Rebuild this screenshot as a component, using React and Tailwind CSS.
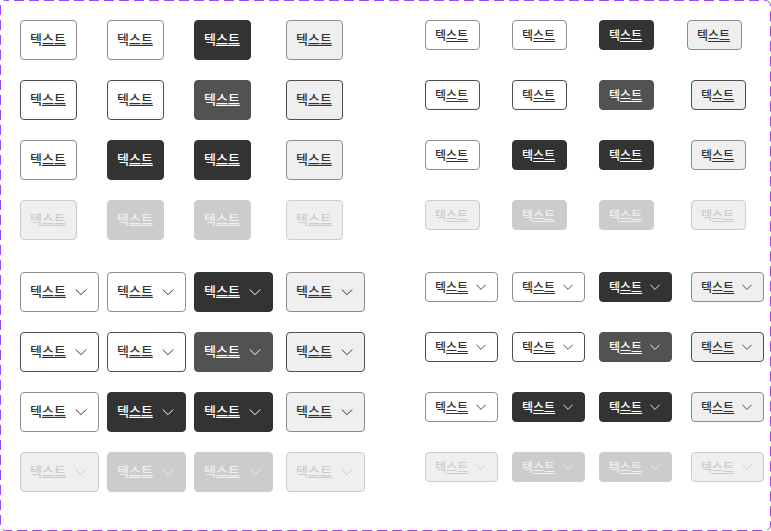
import clsx from 'clsx';

const tones = {
  outline: 'border-[#8c8c8c] bg-white text-[#333]',
  outlineStrong: 'border-[#4d4d4d] bg-white text-[#333]',
  dark: 'border-[#333] bg-[#333] text-white',
  darkHover: 'border-[#525252] bg-[#525252] text-white',
  gray: 'border-[#8c8c8c] bg-[#efefef] text-[#333]',
  grayStrong: 'border-[#4d4d4d] bg-[#efefef] text-[#333]',
  disabledOutline: 'border-[#ccc] bg-[#efefef] text-[#ccc]',
  disabledSolid: 'border-[#ccc] bg-[#ccc] text-[#efefef]',
};

const rows = [
  ['outline', 'outline', 'dark', 'gray'],
  ['outlineStrong', 'outlineStrong', 'darkHover', 'grayStrong'],
  ['outline', 'dark', 'dark', 'gray'],
  ['disabledOutline', 'disabledSolid', 'disabledSolid', 'disabledOutline'],
];

const sizes = {
  large: {
    plain: 'h-10 w-[57px] text-[13px]',
    menu: 'h-10 w-[79px] text-[13px]',
    label: 'pb-0.5',
    icon: 'size-4',
  },
  small: {
    plain: 'h-[30px] w-[55px] text-[12px]',
    menu: 'h-[30px] w-[73px] text-[12px]',
    label: '',
    icon: 'size-[14px]',
  },
};

function Chevron({ className }) {
  return (
    <svg viewBox="0 0 16 16" fill="none" stroke="currentColor" className={className} aria-hidden="true">
      <path d="M2.8 5.5 8 10.7 13.2 5.5" />
    </svg>
  );
}

function TextButton({ tone, size, menu }) {
  return (
    <button
      type="button"
      disabled={tone.startsWith('disabled')}
      aria-haspopup={menu ? 'menu' : undefined}
      className={clsx(
        'flex items-center justify-between rounded border px-[9px] font-medium whitespace-nowrap',
        menu ? sizes[size].menu : sizes[size].plain,
        tones[tone],
      )}
    >
      <span className={sizes[size].label}>
        텍<span className="underline decoration-1 underline-offset-1">스트</span>
      </span>
      {menu && <Chevron className={sizes[size].icon} />}
    </button>
  );
}

function ButtonGrid({ size, menu }) {
  return (
    <div className="flex flex-col">
      {rows.map((row, r) => (
        <div key={r} className="grid h-[60px] grid-cols-[87px_87px_92px_auto] items-start justify-start">
          {row.map((tone, c) => (
            <div key={c} className={clsx(size === 'small' && !menu && r === 0 && c === 3 && '-ml-1')}>
              <TextButton tone={tone} size={size} menu={menu} />
            </div>
          ))}
        </div>
      ))}
    </div>
  );
}

export default function App() {
  return (
    <main className="relative min-h-screen bg-white font-['Noto_Sans_CJK_KR',sans-serif]">
      <svg className="pointer-events-none absolute inset-0 size-full" fill="none" aria-hidden="true">
        <rect
          x="0.5"
          y="0.5"
          rx="5"
          className="h-[calc(100%-1px)] w-[calc(100%-1px)]"
          stroke="#9747ff"
          strokeDasharray="10 5"
          strokeDashoffset="6.5"
        />
      </svg>
      <div className="flex justify-between pt-5 pr-[7px] pl-5">
        <div className="flex flex-col gap-3">
          <ButtonGrid size="large" />
          <ButtonGrid size="large" menu />
        </div>
        <div className="flex flex-col gap-3">
          <ButtonGrid size="small" />
          <ButtonGrid size="small" menu />
        </div>
      </div>
    </main>
  );
}
